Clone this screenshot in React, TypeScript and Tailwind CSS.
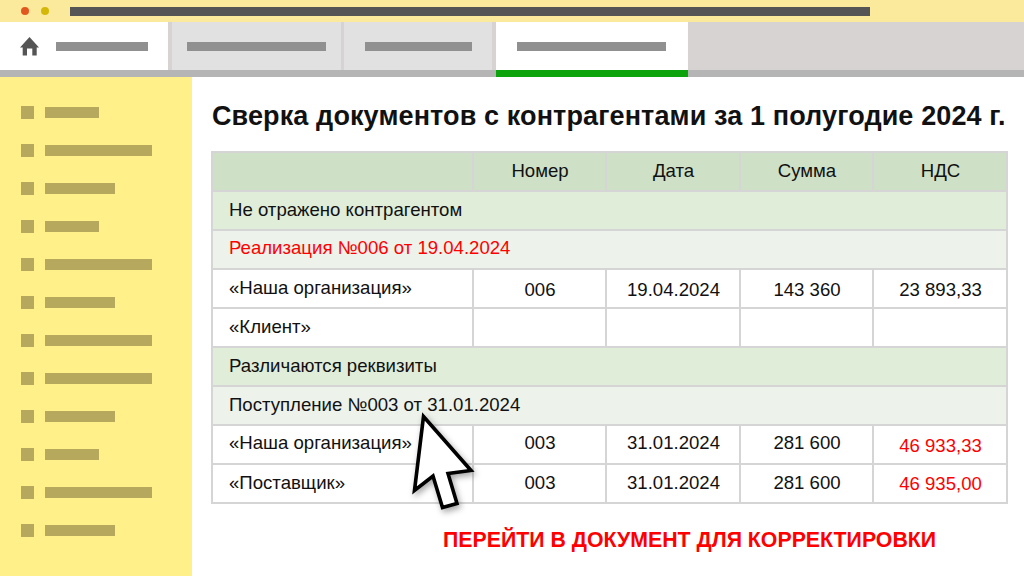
const sideRows = ["w-[54px]", "w-[107px]", "w-[70px]", "w-[54px]", "w-[107px]", "w-[70px]", "w-[107px]", "w-[107px]", "w-[70px]", "w-[54px]", "w-[107px]", "w-[70px]"];

function Row({ cells, first, rest, last }: { cells: string[]; first: string; rest: string; last?: string }) {
  return (
    <tr className="h-[39px]">
      {cells.map((c, i) => (
        <td
          key={i}
          className={
            "border-2 border-[#d5d5d5] " +
            (i === 0 ? "pl-[16px] text-left " + first : "pl-[1px] text-center " + (i === 4 && last ? last + " text-[#ff0000]" : rest + " text-[#111]")) +
            (i === 0 ? " text-[#111]" : "")
          }
        >
          {c}
        </td>
      ))}
    </tr>
  );
}

function Band({ text, kind, red, pad }: { text: string; kind: "a" | "b"; red?: boolean; pad: string }) {
  return (
    <tr className={"h-[39px] " + (kind === "a" ? "bg-[#dfedd9]" : "bg-[#edf2eb]")}>
      <td colSpan={5} className={"border-2 border-[#d5d5d5] pl-[16px] text-left " + pad + (red ? " text-[#ff0000]" : " text-[#111]")}>
        {text}
      </td>
    </tr>
  );
}

export default function App() {
  return (
    <div className="relative flex h-[576px] w-[1024px] flex-col overflow-hidden bg-white font-['Liberation_Sans',Arial,sans-serif]">
      <div className="flex h-[22px] items-center bg-[#fcea9c] pl-[21px]">
        <span className="h-[8px] w-[8px] rounded-full bg-[#e2571e]" />
        <span className="ml-[12px] h-[8px] w-[8px] rounded-full bg-[#d4b808]" />
        <span className="ml-[21px] h-[9px] w-[800px] bg-[#555555]" />
      </div>

      <div className="flex h-[48px] bg-[#d7d3d3]">
        <div className="flex w-[168px] items-center bg-white pl-[20px]">
          <svg width="20" height="19" viewBox="0 0 20 19" className="shrink-0">
            <path d="M9.5 0 L19 10.5 L16.7 10.5 L16.7 18.5 L12.3 18.5 L12.3 11.5 L7 11.5 L7 18.5 L2.7 18.5 L2.7 10.5 L0 10.5 Z" fill="#555555" />
          </svg>
          <span className="ml-[16px] h-[9px] w-[92px] bg-[#909090]" />
        </div>
        <div className="ml-[4px] flex w-[169px] items-center bg-[#e1e1e1] pl-[15px]">
          <span className="h-[9px] w-[139px] bg-[#909090]" />
        </div>
        <div className="ml-[3px] flex w-[148px] items-center bg-[#e1e1e1] pl-[21px]">
          <span className="h-[9px] w-[107px] bg-[#909090]" />
        </div>
        <div className="ml-[4px] flex w-[192px] items-center bg-white pl-[21px]">
          <span className="h-[9px] w-[149px] bg-[#909090]" />
        </div>
      </div>

      <div className="flex h-[7px] bg-[#b5b5b5]">
        <span className="ml-[496px] h-[7px] w-[192px] bg-[#0ca30c]" />
      </div>

      <div className="flex min-h-0 flex-1">
        <aside className="flex w-[192px] shrink-0 flex-col gap-[25px] bg-[#fff08a] pl-[21px] pt-[29px]">
          {sideRows.map((w, i) => (
            <div key={i} className="flex h-[13px] items-center">
              <span className="h-[13px] w-[13px] bg-[#b6a95e]" />
              <span className={"ml-[11px] h-[11px] bg-[#b6a95e] " + w} />
            </div>
          ))}
        </aside>

        <main className="flex-1 pl-[19px] pt-[23px]">
          <h1 className="ml-[1px] h-[32px] whitespace-nowrap text-[27px] font-bold leading-[32px] tracking-[0.12px] text-[#111]">
            Сверка документов с контрагентами за 1 полугодие 2024 г.
          </h1>
          <table className="mt-[19px] w-[795px] table-fixed border-collapse text-[18.6px]">
            <colgroup>
              <col className="w-[261px]" />
              <col className="w-[133px]" />
              <col className="w-[134px]" />
              <col className="w-[133px]" />
              <col className="w-[134px]" />
            </colgroup>
            <tbody>
              <tr className="h-[39px] bg-[#cee0c5]">
                {["", "Номер", "Дата", "Сумма", "НДС"].map((h, i) => (
                  <td key={i} className="border-2 border-[#d5d5d5] pb-[2px] pl-[1px] text-center text-[#111]">{h}</td>
                ))}
              </tr>
              <Band pad="pb-[1px]" text="Не отражено контрагентом" kind="a" />
              <Band pad="pb-[3px]" text="Реализация №006 от 19.04.2024" kind="b" red />
              <Row first="pb-[2px]" rest="pt-[3px]" cells={["«Наша организация»", "006", "19.04.2024", "143 360", "23 893,33"]} />
              <Row first="pb-[2px]" rest="pt-[1px]" cells={["«Клиент»", "", "", "", ""]} />
              <Band pad="pb-[1px]" text="Различаются реквизиты" kind="a" />
              <Band pad="pb-[1px]" text="Поступление №003 от 31.01.2024" kind="b" />
              <Row first="pb-[3px]" rest="pb-[3px]" last="pt-[2px]" cells={["«Наша организация»", "003", "31.01.2024", "281 600", "46 933,33"]} />
              <Row first="pb-[2px]" rest="pb-[2px]" last="pt-[0px]" cells={["«Поставщик»", "003", "31.01.2024", "281 600", "46 935,00"]} />
            </tbody>
          </table>
          <p className="mt-[23px] pl-[232px] text-[21.3px] font-bold leading-[26px] text-[#ff0000]">
            ПЕРЕЙТИ В ДОКУМЕНТ ДЛЯ КОРРЕКТИРОВКИ
          </p>
        </main>
      </div>

      <svg className="absolute left-[405px] top-[405px] drop-shadow-[2px_3px_3px_rgba(0,0,0,0.35)]" width="80" height="112" viewBox="405 405 80 112">
        <path
          d="M423.5 416.5 L471 470.5 L448 473.5 L457 503.5 L442.5 507.5 L433 476 L414.5 490.5 Z"
          fill="#ffffff"
          stroke="#000000"
          strokeWidth="3.6"
          strokeLinejoin="miter"
        />
      </svg>
    </div>
  );
}
